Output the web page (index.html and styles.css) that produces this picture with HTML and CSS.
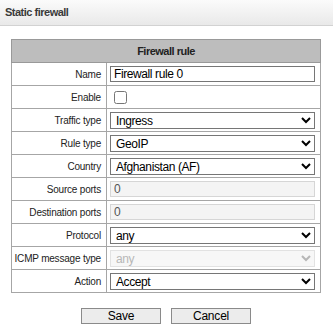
FILE: index.html
```html
<!DOCTYPE html>
<html lang="en">
<head>
    <meta charset="UTF-8">
    <title>Static firewall</title>
    <link rel="stylesheet" href="styles.css">
</head>
<body>
    <div class="titleBar">Static firewall</div>
    <div class="content">
        <table class="ruleTable">
            <tr>
                <th colspan="2">Firewall rule</th>
            </tr>
            <tr>
                <td class="label">Name</td>
                <td><input type="text" class="field" value="Firewall rule 0"></td>
            </tr>
            <tr>
                <td class="label">Enable</td>
                <td><input type="checkbox" class="check"></td>
            </tr>
            <tr>
                <td class="label">Traffic type</td>
                <td>
                    <select class="field">
                        <option>Ingress</option>
                        <option>Egress</option>
                    </select>
                </td>
            </tr>
            <tr>
                <td class="label">Rule type</td>
                <td>
                    <select class="field">
                        <option>GeoIP</option>
                    </select>
                </td>
            </tr>
            <tr>
                <td class="label">Country</td>
                <td>
                    <select class="field">
                        <option>Afghanistan (AF)</option>
                    </select>
                </td>
            </tr>
            <tr>
                <td class="label">Source ports</td>
                <td><input type="text" class="field" value="0" disabled></td>
            </tr>
            <tr>
                <td class="label">Destination ports</td>
                <td><input type="text" class="field" value="0" disabled></td>
            </tr>
            <tr>
                <td class="label">Protocol</td>
                <td>
                    <select class="field">
                        <option>any</option>
                    </select>
                </td>
            </tr>
            <tr>
                <td class="label">ICMP message type</td>
                <td>
                    <select class="field" disabled>
                        <option>any</option>
                    </select>
                </td>
            </tr>
            <tr>
                <td class="label">Action</td>
                <td>
                    <select class="field">
                        <option>Accept</option>
                    </select>
                </td>
            </tr>
        </table>
        <div class="buttons">
            <button class="btn">Save</button>
            <button class="btn">Cancel</button>
        </div>
    </div>
</body>
</html>
```

FILE: styles.css
```css
*{
    margin: 0;
    padding: 0;
    box-sizing: border-box;
}
body{
    font-family: "Liberation Sans", Arial, sans-serif;
    font-size: 10px;
    color: #222;
    background: #fff;
}
.titleBar{
    height: 26px;
    padding-left: 5px;
    line-height: 25px;
    font-size: 11px;
    font-weight: bold;
    letter-spacing: -0.5px;
    color: #3a3a3a;
    background: linear-gradient(#fbfbfb, #e9e9e9);
    border-bottom: 1px solid #d2d2d2;
}
.content{
    padding: 13px 0 0 11px;
}
.ruleTable{
    width: 310px;
    border-collapse: collapse;
    border: 1px solid #999;
}
.ruleTable th{
    height: 23px;
    background: #bdbdbd;
    font-size: 11px;
    font-weight: bold;
    letter-spacing: -0.5px;
    color: #222;
    border: 1px solid #999;
}
.ruleTable td{
    height: 23px;
    border: 1px solid #a6a6a6;
    padding: 0 4px 0 3px;
}
.ruleTable td.label{
    width: 95px;
    text-align: right;
    white-space: nowrap;
    letter-spacing: -0.2px;
    padding: 0 5px 0 0;
}
.field{
    display: block;
    width: 205px;
    height: 16px;
    font-family: "Liberation Sans", Arial, sans-serif;
    font-size: 12px;
    letter-spacing: -0.4px;
    color: #000;
    border: 1px solid #767676;
    border-radius: 0;
    padding: 0 3px;
    background: #fff;
}
select.field{
    height: 17px;
    padding: 0 1px;
}
.field:disabled{
    background: #f4f4f4;
    border-color: #d6d6d6;
    color: #555;
}
select.field:disabled{
    color: #999;
}
.check{
    display: block;
    width: 13px;
    height: 13px;
    margin-left: 4px;
}
.buttons{
    display: flex;
    gap: 10px;
    padding: 15px 0 0 70px;
}
.btn{
    width: 80px;
    height: 16px;
    font-family: "Liberation Sans", Arial, sans-serif;
    font-size: 12px;
    letter-spacing: -0.2px;
    line-height: 14px;
    color: #000;
    background: #ececec;
    border: 1px solid #8a8a8a;
}
```
